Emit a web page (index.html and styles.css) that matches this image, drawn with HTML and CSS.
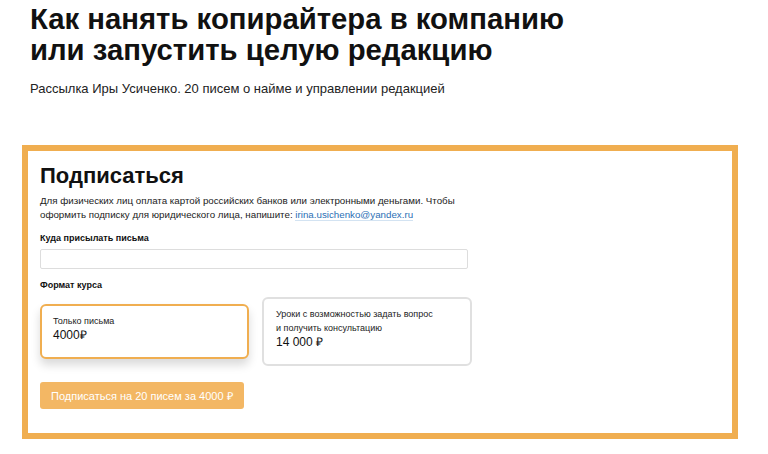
FILE: index.html
```html
<!doctype html>
<html lang="ru">

<head>
  <meta charset="UTF-8" />
  <meta name="viewport" content="width=device-width, initial-scale=1.0" />
  <title>Как нанять копирайтера</title>
  <link rel="stylesheet" href="styles.css">
</head>

<body>
  <header class="intro">
    <h1>Как нанять копирайтера в компанию<br>или запустить целую редакцию</h1>
    <p class="lead">Рассылка Иры Усиченко. 20 писем о найме и управлении редакцией</p>
  </header>

  <section class="subscribe">
    <h2>Подписаться</h2>
    <p class="note">
      Для физических лиц оплата картой российских банков или электронными деньгами. Чтобы<br>
      оформить подписку для юридического лица, напишите: <a href="#">irina.usichenko@yandex.ru</a>
    </p>

    <form>
      <label class="field-label" for="email">Куда присылать письма</label>
      <input id="email" type="email" />

      <div class="field-label">Формат курса</div>
      <div class="plans">
        <div class="plan selected">
          <div class="plan-name">Только письма</div>
          <div class="plan-price">4000₽</div>
        </div>
        <div class="plan">
          <div class="plan-name">Уроки с возможностью задать вопрос<br>и получить консультацию</div>
          <div class="plan-price">14 000 ₽</div>
        </div>
      </div>

      <button type="button">Подписаться на 20 писем за 4000 ₽</button>
    </form>
  </section>
</body>

</html>
```

FILE: styles.css
```css
body {
  margin: 0;
  font-family: "Liberation Sans", Arial, sans-serif;
  color: #111;
  background: white;
}

.intro {
  padding: 3px 30px 0;
}

h1 {
  margin: 0;
  font-size: 29.3px;
  line-height: 31px;
  font-weight: bold;
}

.lead {
  margin: 16px 0 0;
  font-size: 13px;
  line-height: 16px;
  color: #222;
}

.subscribe {
  margin: 48px 0 0 22px;
  width: 716px;
  box-sizing: border-box;
  border: 6px solid #f0ae50;
  padding: 12px 12px 24px;
}

h2 {
  margin: 0;
  font-size: 22px;
  line-height: 26px;
}

.note {
  margin: 5px 0 0;
  font-size: 9.75px;
  line-height: 13.5px;
  color: #222;
}

.note a {
  color: #2b6fb5;
  text-decoration: none;
  border-bottom: 1px solid #d3e3f2;
}

form {
  display: flex;
  flex-direction: column;
  align-items: flex-start;
}

.field-label {
  margin-top: 11px;
  font-size: 9px;
  line-height: 13px;
  font-weight: bold;
}

input {
  margin-top: 4px;
  width: 428px;
  height: 20px;
  box-sizing: border-box;
  border: 1px solid #ddd;
  border-radius: 2px;
}

input + .field-label {
  margin-top: 10px;
}

.plans {
  margin-top: 5px;
  display: flex;
  align-items: center;
  gap: 13px;
}

.plan {
  width: 209px;
  box-sizing: border-box;
  padding: 8px 12px 14px;
  border: 2px solid #e0e0e0;
  border-radius: 6px;
  background: white;
}

.plan + .plan {
  width: 210px;
}

.plan.selected {
  padding-left: 11px;
  border-color: #f0ae50;
  box-shadow: 0 6px 10px rgba(0, 0, 0, 0.15);
}

.plan-name {
  font-size: 9px;
  line-height: 14px;
  color: #222;
}

.plan-price {
  font-size: 12px;
  line-height: 15px;
  color: #111;
}

button {
  margin-top: 16px;
  height: 27px;
  padding: 0 11px;
  border: none;
  border-radius: 3px;
  background: #f3b764;
  color: white;
  font-family: inherit;
  font-size: 11px;
}
```
